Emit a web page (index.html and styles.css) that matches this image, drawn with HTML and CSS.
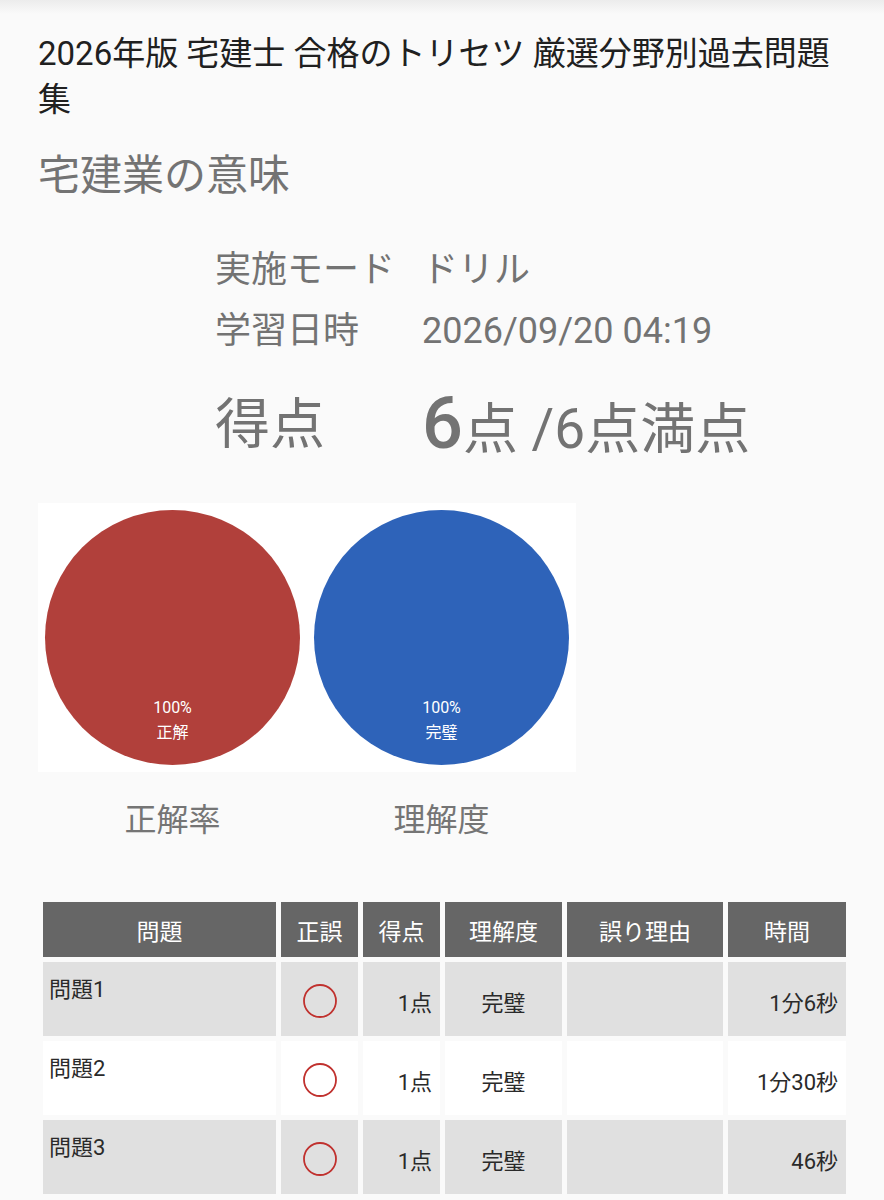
FILE: index.html
```html
<!DOCTYPE html>
<html lang="ja">
<head>
  <meta charset="UTF-8" />
  <meta name="viewport" content="width=device-width, initial-scale=1.0"/>
  <title>学習結果</title>
  <link rel="stylesheet" href="styles.css">
</head>
<body>

  <div class="topshade"></div>

  <div class="page">
    <h1 class="book-title">2026年版 宅建士 合格のトリセツ 厳選分野別過去問題集</h1>
    <h2 class="unit-title">宅建業の意味</h2>

    <div class="info">
      <div class="info-label">実施モード</div>
      <div class="info-value">ドリル</div>
      <div class="info-label">学習日時</div>
      <div class="info-value">2026/09/20 04:19</div>
      <div class="info-label score">得点</div>
      <div class="info-value score"><span class="big">6</span>点 /6点満点</div>
    </div>

    <div class="charts">
      <div class="chart">
        <div class="pie pie-red">
          <span>100%</span>
          <span>正解</span>
        </div>
      </div>
      <div class="chart">
        <div class="pie pie-blue">
          <span>100%</span>
          <span>完璧</span>
        </div>
      </div>
    </div>
    <div class="chart-labels">
      <div>正解率</div>
      <div>理解度</div>
    </div>

    <table class="result">
      <colgroup>
        <col class="c-q">
        <col class="c-ok">
        <col class="c-pt">
        <col class="c-lv">
        <col class="c-why">
        <col class="c-time">
      </colgroup>
      <thead>
        <tr>
          <th>問題</th>
          <th>正誤</th>
          <th>得点</th>
          <th>理解度</th>
          <th>誤り理由</th>
          <th>時間</th>
        </tr>
      </thead>
      <tbody>
        <tr>
          <td class="q">問題1</td>
          <td class="mark"><svg width="34" height="34" viewBox="0 0 34 34"><circle cx="17" cy="17" r="16" fill="none" stroke="#c0312e" stroke-width="1.8"/></svg></td>
          <td class="num">1点</td>
          <td class="mid">完璧</td>
          <td></td>
          <td class="num">1分6秒</td>
        </tr>
        <tr class="alt">
          <td class="q">問題2</td>
          <td class="mark"><svg width="34" height="34" viewBox="0 0 34 34"><circle cx="17" cy="17" r="16" fill="none" stroke="#c0312e" stroke-width="1.8"/></svg></td>
          <td class="num">1点</td>
          <td class="mid">完璧</td>
          <td></td>
          <td class="num">1分30秒</td>
        </tr>
        <tr>
          <td class="q">問題3</td>
          <td class="mark"><svg width="34" height="34" viewBox="0 0 34 34"><circle cx="17" cy="17" r="16" fill="none" stroke="#c0312e" stroke-width="1.8"/></svg></td>
          <td class="num">1点</td>
          <td class="mid">完璧</td>
          <td></td>
          <td class="num">46秒</td>
        </tr>
      </tbody>
    </table>
  </div>

</body>
</html>
```

FILE: styles.css
```css
body {
  margin: 0;
  background: #fafafa;
  font-family: Roboto, "Noto Sans CJK JP", sans-serif;
  color: #757575;
}
.topshade {
  height: 14px;
  margin-bottom: -14px;
  background: linear-gradient(to bottom, #ececec, #fafafa);
}
.page {
  padding: 31px 33px 0 38px;
}
.book-title {
  margin: 0;
  font-size: 33px;
  line-height: 46px;
  font-weight: normal;
  color: #202020;
}
.unit-title {
  margin: 25px 0 0;
  font-size: 42px;
  line-height: 56px;
  font-weight: normal;
  color: #737373;
}
.info {
  display: grid;
  grid-template-columns: 207px auto;
  margin: 36px 0 0 177px;
  font-size: 36px;
  line-height: 61px;
  color: #737373;
}
.info .score {
  margin-top: 22px;
  font-size: 55px;
  line-height: 80px;
}
.info .big {
  font-size: 72px;
  font-weight: 500;
}
.charts {
  display: flex;
  width: 538px;
  height: 269px;
  margin-top: 34px;
  background: #fff;
}
.chart {
  flex: 1;
  display: flex;
  align-items: center;
  justify-content: center;
}
.pie {
  width: 255px;
  height: 255px;
  border-radius: 50%;
  display: flex;
  flex-direction: column;
  align-items: center;
  justify-content: flex-end;
  padding-bottom: 20px;
  box-sizing: border-box;
  color: #fff;
  font-size: 16px;
  line-height: 25px;
}
.pie-red {
  background: #b1403b;
}
.pie-blue {
  background: #2e63b9;
}
.chart-labels {
  display: flex;
  width: 538px;
  margin-top: 26px;
  font-size: 32px;
  line-height: 44px;
}
.chart-labels div {
  flex: 1;
  text-align: center;
}
.result {
  margin-top: 55px;
  width: 813px;
  border-collapse: separate;
  border-spacing: 5px;
  table-layout: fixed;
  font-size: 22px;
}
.c-q { width: 233px; }
.c-ok { width: 77px; }
.c-pt { width: 77px; }
.c-lv { width: 117px; }
.c-why { width: 156px; }
.c-time { width: 118px; }
.result thead tr {
  height: 55px;
}
.result tbody tr {
  height: 74px;
}
.result th {
  padding: 0;
  background: #666;
  color: #fff;
  font-size: 23px;
  font-weight: normal;
}
.result td {
  padding: 0 8px;
  background: #e0e0e0;
  color: #2a2a2a;
  vertical-align: middle;
}
.result tr.alt td {
  background: #fff;
}
.result td.q {
  vertical-align: top;
  padding: 13px 6px 0;
  line-height: 30px;
}
.result td.mark {
  text-align: center;
  padding: 4px 0 0;
  line-height: 0;
}
.result td.num {
  text-align: right;
  padding-top: 4px;
}
.result td.mid {
  text-align: center;
  padding-top: 4px;
}
```
